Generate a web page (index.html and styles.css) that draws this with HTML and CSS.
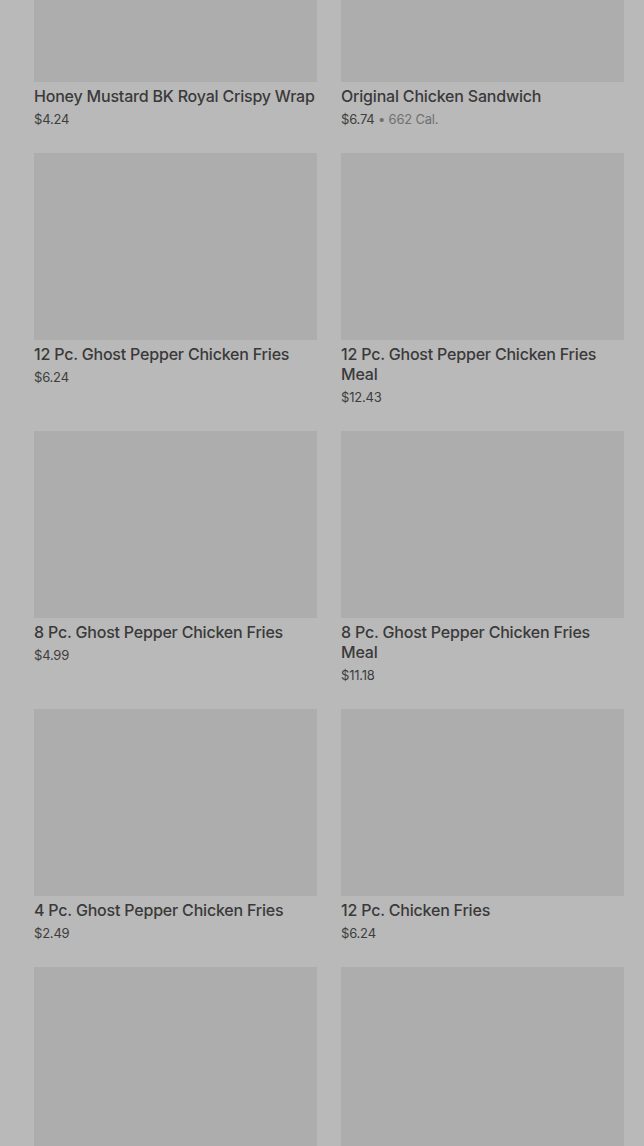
FILE: index.html
```html
<!DOCTYPE html>
<html>
<head>
  <meta charset="UTF-8">
  <title>Menu</title>
  <link rel="stylesheet" href="styles.css">
</head>
<body>
  <div class="menu-grid">
    <div class="item">
      <div class="item-img"></div>
      <div class="item-title">Honey Mustard BK Royal Crispy Wrap</div>
      <div class="item-meta">$4.24</div>
    </div>
    <div class="item">
      <div class="item-img"></div>
      <div class="item-title">Original Chicken Sandwich</div>
      <div class="item-meta">$6.74 <span class="cal">• 662 Cal.</span></div>
    </div>
    <div class="item">
      <div class="item-img"></div>
      <div class="item-title">12 Pc. Ghost Pepper Chicken Fries</div>
      <div class="item-meta">$6.24</div>
    </div>
    <div class="item">
      <div class="item-img"></div>
      <div class="item-title">12 Pc. Ghost Pepper Chicken Fries Meal</div>
      <div class="item-meta">$12.43</div>
    </div>
    <div class="item">
      <div class="item-img"></div>
      <div class="item-title">8 Pc. Ghost Pepper Chicken Fries</div>
      <div class="item-meta">$4.99</div>
    </div>
    <div class="item">
      <div class="item-img"></div>
      <div class="item-title">8 Pc. Ghost Pepper Chicken Fries Meal</div>
      <div class="item-meta">$11.18</div>
    </div>
    <div class="item">
      <div class="item-img"></div>
      <div class="item-title">4 Pc. Ghost Pepper Chicken Fries</div>
      <div class="item-meta">$2.49</div>
    </div>
    <div class="item">
      <div class="item-img"></div>
      <div class="item-title">12 Pc. Chicken Fries</div>
      <div class="item-meta">$6.24</div>
    </div>
    <div class="item">
      <div class="item-img"></div>
    </div>
    <div class="item">
      <div class="item-img"></div>
    </div>
  </div>
</body>
</html>
```

FILE: styles.css
```css
body {
  margin: 0;
  background-color: #b9b9b9;
  font-family: Inter, "Noto Sans", sans-serif;
  color: #3b3b3b;
  overflow: hidden;
}
.menu-grid {
  display: grid;
  grid-template-columns: 283px 283px;
  column-gap: 24px;
  row-gap: 25px;
  padding: 0 20px 0 34px;
  margin-top: -105px;
}
.item-img {
  height: 187px;
  background-color: #adadad;
}
.item-title {
  margin-top: 4px;
  font-size: 16px;
  font-weight: 500;
  line-height: 20px;
  letter-spacing: -0.2px;
  color: #3a3a3a;
}
.item-meta {
  margin-top: 4px;
  font-size: 13px;
  line-height: 18px;
  letter-spacing: -0.2px;
  color: #3d3d3d;
}
.cal {
  color: #707070;
}
```
